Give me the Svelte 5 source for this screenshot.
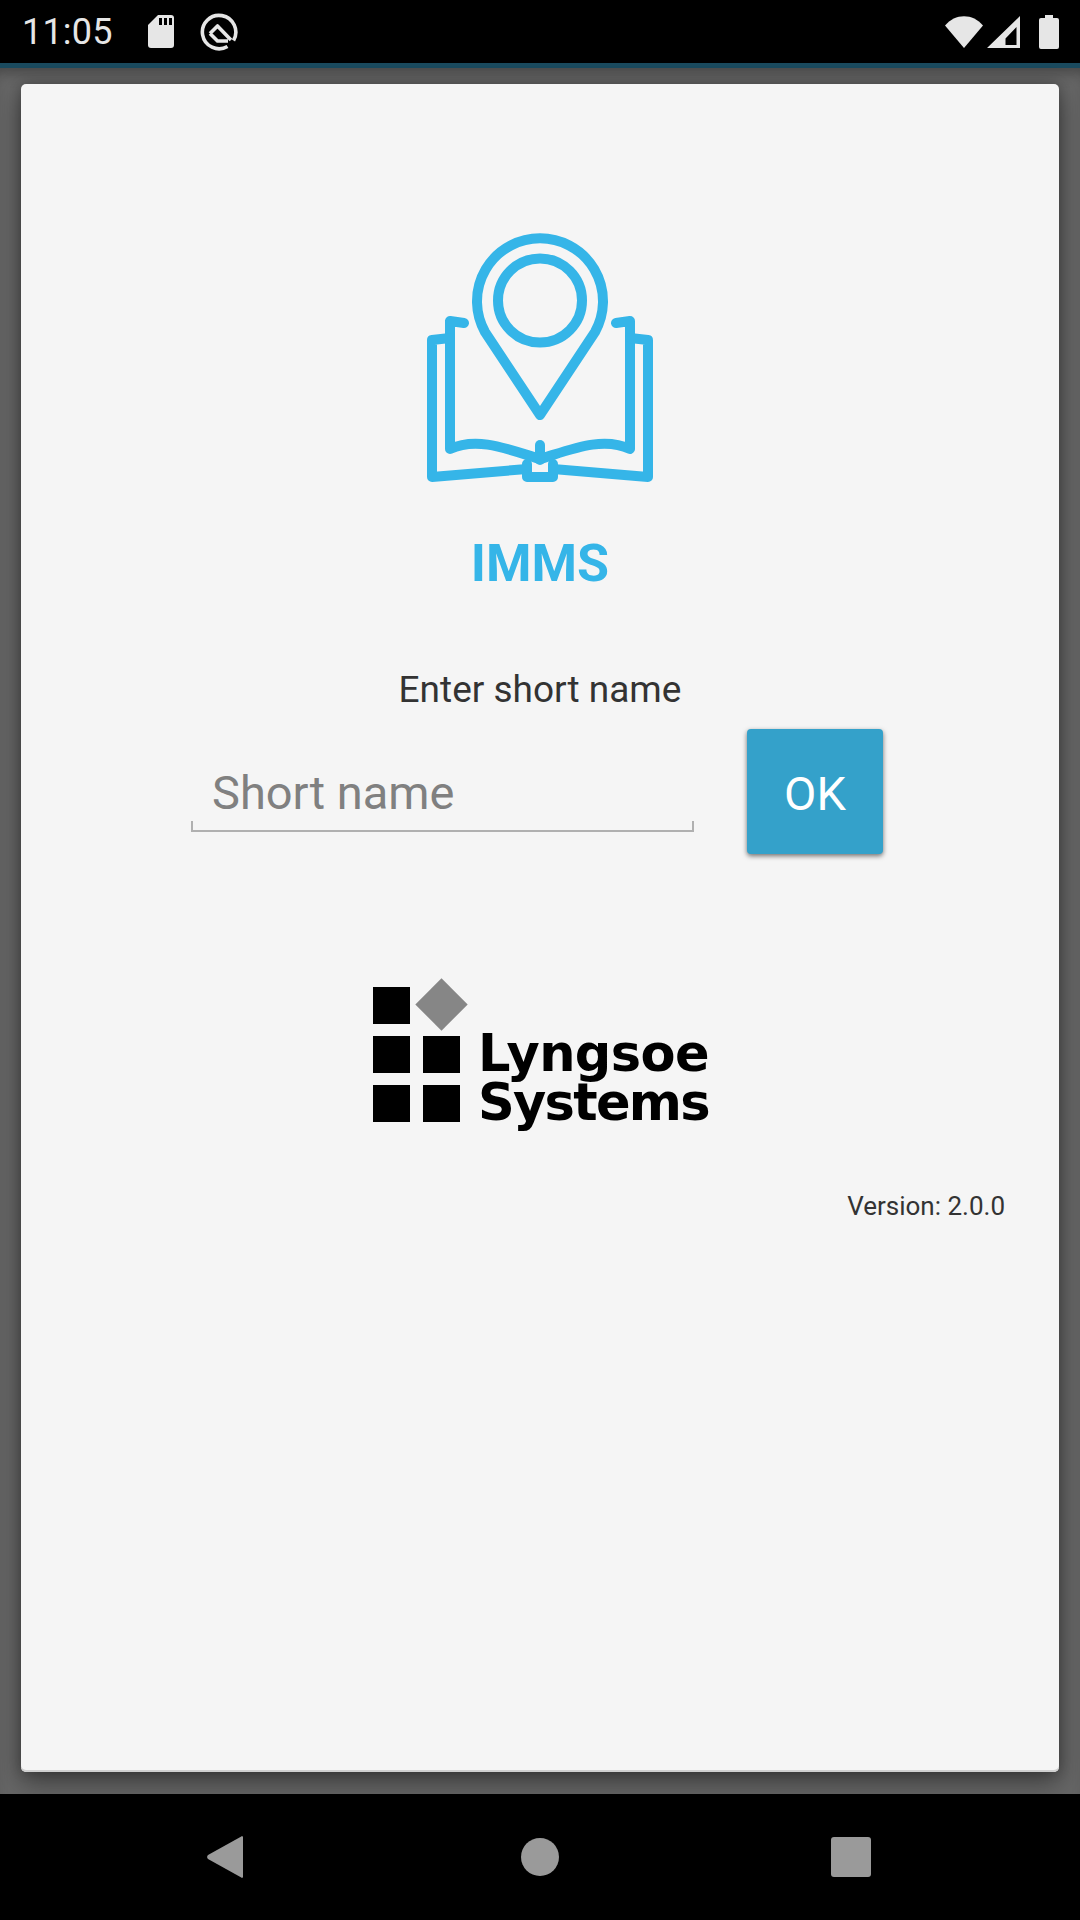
<script>
	let shortName = $state("");
</script>

<div class="screen">
	<header class="status">
		<span class="time">11:05</span>
		<svg class="sd" viewBox="0 0 26 33" aria-hidden="true">
			<path d="M10 0H23a3 3 0 0 1 3 3V30a3 3 0 0 1-3 3H3a3 3 0 0 1-3-3V10Z" fill="#e6e6e6" />
			<path d="M11 3h3v7h-3zM16 3h3v7h-3zM21 3h3v7h-3z" fill="#000" />
		</svg>
		<svg class="q" viewBox="0 0 38 38" aria-hidden="true">
			<path d="M27.5 33.5A16.7 16.7 0 1 1 33.5 27.5" fill="none" stroke="#e6e6e6" stroke-width="3.6" />
			<path d="M10 20.5 L17.5 13 L31 27 M10 20.5 L17.5 28 H28" fill="none" stroke="#e6e6e6" stroke-width="3.6" stroke-linejoin="round" />
		</svg>
		<div class="spacer"></div>
		<svg class="wifi" viewBox="0 0 38 32" aria-hidden="true">
			<path d="M0 9.5C10-3 28-3 38 9.5L19 32Z" fill="#e6e6e6" />
		</svg>
		<svg class="signal" viewBox="0 0 33 32" aria-hidden="true">
			<path fill-rule="evenodd" d="M33 0V32H0ZM29.5 11 18.5 22.5V29H29.5Z" fill="#e6e6e6" />
		</svg>
		<svg class="battery" viewBox="0 0 20 34" aria-hidden="true">
			<path d="M6 0h8v3h4a2 2 0 0 1 2 2V32a2 2 0 0 1-2 2H2a2 2 0 0 1-2-2V5a2 2 0 0 1 2-2h4Z" fill="#e6e6e6" />
		</svg>
	</header>
	<div class="accent"></div>

	<main class="dim">
		<section class="card">
			<svg class="logo" viewBox="0 0 260 280" aria-hidden="true">
				<g fill="none" stroke="#35b5e8" stroke-width="10" stroke-linecap="round" stroke-linejoin="round">
					<path d="M130 205 L75 122 A63 63 0 1 1 185 122 Z" />
					<circle cx="130" cy="90.5" r="42" />
					<path d="M54 113 L40 111 V239 C68 226 100 240 130 249 C160 240 192 226 220 239 V111 L206 113" />
					<path d="M130 235 V250" />
					<path d="M40 128 L22 130 V267 L117 259 M220 128 L238 130 V267 L143 259" />
					<path d="M117 254 V267 H143 V254" />
				</g>
			</svg>
			<h1 class="title">IMMS</h1>
			<p class="prompt">Enter short name</p>
			<div class="form">
				<label class="field">
					<input type="text" placeholder="Short name" bind:value={shortName} />
				</label>
				<button class="ok" type="button">OK</button>
			</div>
			<div class="brand">
				<div class="blocks">
					<span class="block"></span>
					<span class="diamond"></span>
					<span class="block"></span>
					<span class="block"></span>
					<span class="block"></span>
					<span class="block"></span>
				</div>
				<div class="wordmark"><span class="wide">Lyngsoe</span><br />Systems</div>
			</div>
			<p class="version">Version: 2.0.0</p>
		</section>
	</main>

	<nav class="nav">
		<svg class="back" viewBox="0 0 36 42" aria-hidden="true">
			<path d="M36 1V41a1 1 0 0 1-1.7.6L1 23a3 3 0 0 1 0-4L34.3.4A1 1 0 0 1 36 1Z" fill="#9a9a9a" />
		</svg>
		<span class="home"></span>
		<span class="recent"></span>
	</nav>
</div>

<style>
	:global(body) {
		margin: 0;
		background: #000;
	}

	.screen {
		display: flex;
		flex-direction: column;
		width: 1080px;
		height: 1920px;
		overflow: hidden;
		font-family: Roboto, sans-serif;
	}

	.status {
		display: flex;
		align-items: center;
		height: 63px;
		padding: 0 21px 0 22px;
		box-sizing: border-box;
		background: #000;
		color: #e6e6e6;
	}

	.time {
		font-size: 36px;
		width: 126px;
		letter-spacing: 0.2px;
	}

	.sd {
		width: 26px;
		height: 33px;
		margin-right: 26px;
	}

	.q {
		width: 38px;
		height: 38px;
	}

	.spacer {
		flex: 1;
	}

	.wifi {
		width: 38px;
		height: 32px;
		margin-right: 4px;
	}

	.signal {
		width: 33px;
		height: 32px;
		margin-right: 19px;
	}

	.battery {
		width: 20px;
		height: 34px;
	}

	.accent {
		height: 5px;
		background: #1a4a5e;
	}

	.dim {
		flex: 1;
		display: flex;
		padding: 16px 21px 22px;
		background: #666;
		box-shadow: inset 0 12px 14px -8px #444;
	}

	.card {
		flex: 1;
		display: flex;
		flex-direction: column;
		align-items: center;
		background: #f5f5f5;
		border-radius: 5px;
		box-shadow: inset 0 -2px 0 #d0d0d0, 0 10px 26px rgba(0, 0, 0, 0.42), 0 0 12px rgba(0, 0, 0, 0.22);
	}

	.logo {
		width: 260px;
		height: 280px;
		margin-top: 126px;
	}

	.title {
		margin: 44px 0 0;
		font-size: 52px;
		line-height: 60px;
		font-weight: 700;
		color: #35b5e8;
	}

	.prompt {
		margin: 74px 0 0;
		font-size: 37px;
		line-height: 44px;
		color: #333;
	}

	.form {
		display: flex;
		align-self: flex-start;
		align-items: flex-start;
		margin: 17px 0 0 170px;
	}

	.field {
		display: block;
		width: 503px;
		height: 103px;
		box-sizing: border-box;
		margin-right: 53px;
		border-bottom: 2px solid #b0b0b0;
		background:
			linear-gradient(#b0b0b0, #b0b0b0) left bottom / 2px 9px no-repeat,
			linear-gradient(#b0b0b0, #b0b0b0) right bottom / 2px 9px no-repeat;
	}

	input {
		display: block;
		width: 100%;
		height: 101px;
		padding: 25px 0 0 21px;
		box-sizing: border-box;
		border: 0;
		outline: 0;
		background: transparent;
		font: 47px Roboto, sans-serif;
		color: #333;
	}

	input::placeholder {
		color: #808080;
		opacity: 1;
	}

	.ok {
		width: 136px;
		height: 125px;
		padding: 4px 0 0;
		border: 0;
		border-radius: 4px;
		background: #34a1ca;
		box-shadow: 0 2px 5px rgba(0, 0, 0, 0.55);
		font: 47px Roboto, sans-serif;
		color: #fff;
	}

	.brand {
		display: flex;
		align-items: flex-end;
		margin-top: 133px;
		margin-left: 2px;
	}

	.blocks {
		display: grid;
		grid-template-columns: 37px 37px;
		grid-auto-rows: 37px;
		gap: 12px 13px;
		margin-right: 18px;
	}

	.block {
		background: #000;
	}

	.diamond {
		width: 37px;
		height: 37px;
		background: #868686;
		transform: translate(0, -1px) rotate(45deg);
	}

	.wordmark {
		margin-bottom: -5px;
		font-family: "DejaVu Sans", sans-serif;
		font-weight: 700;
		font-size: 51px;
		line-height: 49px;
		letter-spacing: -1.7px;
		color: #000;
	}

	.wide {
		letter-spacing: -0.6px;
	}

	.version {
		align-self: flex-end;
		margin: 69px 54px 0 0;
		font-size: 26px;
		line-height: 30px;
		color: #333;
	}

	.nav {
		display: flex;
		align-items: center;
		height: 126px;
		background: #000;
	}

	.back {
		width: 36px;
		height: 42px;
		margin-left: 207px;
		margin-right: 278px;
	}

	.home {
		width: 38px;
		height: 38px;
		border-radius: 50%;
		background: #9a9a9a;
		margin-right: 272px;
	}

	.recent {
		width: 40px;
		height: 40px;
		border-radius: 3px;
		background: #9a9a9a;
	}
</style>
